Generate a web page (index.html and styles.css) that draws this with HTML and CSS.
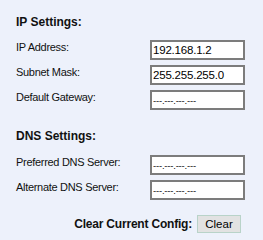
FILE: index.html
```html
<!DOCTYPE html>
<html lang="en">
<head>
    <meta charset="UTF-8">
    <title>Network Settings</title>
    <link rel="stylesheet" href="styles.css">
</head>
<body>
    <div class="settings">
        <h2 class="section-title">IP Settings:</h2>
        <div class="field-grid">
            <label for="ipAddress">IP Address:</label>
            <input type="text" id="ipAddress" value="192.168.1.2">

            <label for="subnetMask">Subnet Mask:</label>
            <input type="text" id="subnetMask" value="255.255.255.0">

            <label for="gateway">Default Gateway:</label>
            <input type="text" id="gateway" class="empty" placeholder="---.---.---.---">
        </div>

        <h2 class="section-title dns-title">DNS Settings:</h2>
        <div class="field-grid">
            <label for="dnsPrimary">Preferred DNS Server:</label>
            <input type="text" id="dnsPrimary" class="empty" placeholder="---.---.---.---">

            <label for="dnsAlternate">Alternate DNS Server:</label>
            <input type="text" id="dnsAlternate" class="empty" placeholder="---.---.---.---">
        </div>

        <div class="clear-row">
            <span class="clear-label">Clear Current Config:</span>
            <button class="clear-button" id="clearButton">Clear</button>
        </div>
    </div>
</body>
</html>
```

FILE: styles.css
```css
body {
    margin: 0;
    background-color: #edf1fb;
    font-family: "Liberation Sans", Arial, sans-serif;
    color: #000;
}

.settings {
    padding: 15px 18px 0 16px;
}

.section-title {
    margin: 0 0 10px 0;
    font-size: 12px;
    line-height: 15px;
    font-weight: bold;
    color: #111;
}

.dns-title {
    margin-top: 19px;
    margin-bottom: 11px;
}

.field-grid {
    display: grid;
    grid-template-columns: 134px 95px;
    row-gap: 5px;
}

.field-grid label {
    align-self: start;
    font-size: 11px;
    line-height: 14px;
    letter-spacing: -0.3px;
    color: #111;
}

.field-grid input {
    box-sizing: border-box;
    width: 95px;
    height: 20px;
    margin: 0;
    padding: 0 1px;
    border: 2px solid #7c7c7c;
    background-color: #fff;
    font-family: "Liberation Sans", Arial, sans-serif;
    font-size: 11.5px;
    letter-spacing: -0.2px;
    color: #000;
    outline: none;
}

.field-grid input.empty {
    font-size: 9.5px;
}

.field-grid input::placeholder {
    color: #111;
    opacity: 1;
}

.clear-row {
    display: flex;
    justify-content: flex-end;
    align-items: center;
    gap: 5px;
    margin-top: 15px;
    padding-right: 4px;
}

.clear-label {
    font-size: 12px;
    font-weight: bold;
    letter-spacing: -0.2px;
    color: #111;
}

.clear-button {
    box-sizing: border-box;
    width: 44px;
    height: 18px;
    padding: 0;
    border: 1px solid #b9d3c9;
    background-color: #e2e2e2;
    font-family: "Liberation Sans", Arial, sans-serif;
    font-size: 11.5px;
    color: #000;
    cursor: pointer;
}
```
